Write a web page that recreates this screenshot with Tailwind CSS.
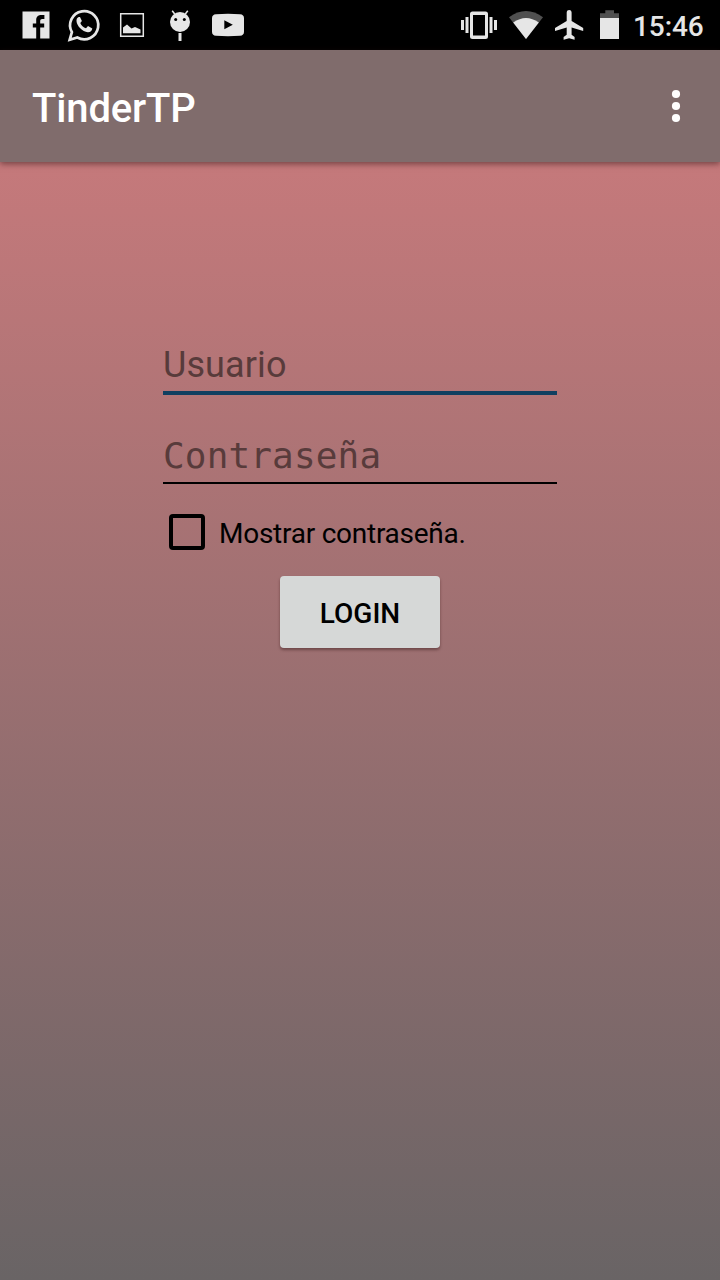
<!DOCTYPE html>
<html lang="es">
<head>
<meta charset="utf-8">
<title>TinderTP</title>
<script src="https://cdn.jsdelivr.net/npm/@tailwindcss/browser@4"></script>
</head>
<body class="w-[720px] h-[1280px] overflow-hidden flex flex-col font-['Roboto',sans-serif] bg-[#696465]">
<div class="h-[50px] shrink-0 bg-black flex items-center justify-between text-[#e6e6e6]">
  <div class="flex">
    <svg class="w-[60px] h-[50px]" viewBox="0 0 60 50" fill="currentColor"><path d="M22.500 11.500h27v27h-9.300v-11h4v-4h-4v-2.500c0-1.300.7-2 2-2h2.200v-4h-3.200c-3.500 0-5 2.200-5 5v3.500h-3.400v4h3.400v11h-13.700z"/></svg>
    <svg class="w-[48px] h-[50px]" viewBox="60 0 48 50"><path d="M69.700 39.700l2.200-7.600a14.100 14.100 0 1 1 5.400 5.400z" fill="none" stroke="currentColor" stroke-width="2.700" stroke-linejoin="miter"/><path d="M78.700 17c-1.700.7-2.300 2.300-2.200 4 .3 5 6 10.800 11.300 11.200 2.400.1 4.300-1.300 4.500-3.700l-4.300-2.500-2 2.300c-2.600-.9-4.800-3-5.700-5.400l1.600-2-1.900-4z" fill="currentColor"/></svg>
    <svg class="w-[48px] h-[50px]" viewBox="108 0 48 50"><path d="M120.700 13.700h22.600v22.600h-22.600z" fill="none" stroke="currentColor" stroke-width="1.500"/><path d="M123 33.300v-5.800l4-3 4.500 4 3.500-1.500 5.500 2.500v3.800z" fill="currentColor"/></svg>
    <svg class="w-[48px] h-[50px]" viewBox="156 0 48 50"><path d="M172.200 10.700l2.500 3.300m13.100-3.300l-2.500 3.300" stroke="currentColor" stroke-width="1.500"/><circle cx="180" cy="22" r="10" fill="currentColor"/><circle cx="175.700" cy="19.500" r="1.500" fill="#000"/><circle cx="184.300" cy="19.500" r="1.500" fill="#000"/><path d="M178.500 33h3v8h-3z" fill="currentColor"/></svg>
    <svg class="w-[48px] h-[50px]" viewBox="204 0 48 50"><path d="M216 14.200q12-.8 24 0q4 .3 4 4v13.600q0 3.700-4 4q-12 .8-24 0q-4-.3-4-4v-13.600q0-3.700 4-4z" fill="currentColor"/><path d="M224.300 20.300l8.500 4.500-8.500 4.500z" fill="#000"/></svg>
  </div>
  <div class="flex items-center">
    <svg class="w-[153px] h-[50px]" viewBox="456 0 153 50" fill="currentColor" overflow="visible">
      <path d="M461 20h3v10h-3zM465.500 17h3v16h-3zM489.500 17h3v16h-3zM494 20h3v10h-3z"/>
      <path fill-rule="evenodd" d="M472.500 11.500h13q2.500 0 2.500 2.500v22.500q0 2.500-2.500 2.500h-13q-2.500 0-2.500-2.500v-22.500q0-2.500 2.500-2.500zM473 15v20.500h12v-20.500z"/>
      <path d="M509 17.200q17-12.600 34 0l-17 21.800z" fill="#505050"/>
      <path d="M513.200 22.600q12.800-9 25.600 0l-12.800 16.400z"/>
      <path d="M583.200 31v-2.900l-11.600-7.200v-8.400c0-3.300-4.900-3.300-4.900 0v8.400l-11.700 7.200v2.900l11.700-3.600v7.300l-3.100 2.300v2.700l5.500-1.500 5.500 1.500v-2.700l-3-2.300v-7.300z"/>
      <path d="M600 13.300h5.300v-3h8.700v3h5v4.700h-19z" fill="#505050"/>
      <path d="M600 18h19v21h-19z"/>
    </svg>
    <span class="ml-[24px] w-[87px] text-[28px] leading-[50px] h-[50px] font-medium tracking-[-0.1px] pt-[2px]">15:46</span>
  </div>
</div>
<header class="h-[112px] shrink-0 relative z-10 bg-[#806c6c] flex items-center justify-between pl-8 pr-[39px] shadow-[0_2px_6px_rgba(50,20,20,0.55)]">
  <h1 class="text-[40px] leading-[48px] font-medium tracking-[-0.15px] text-white pt-[5px]">TinderTP</h1>
  <svg class="w-[10px] h-[34px]" viewBox="0 0 10 34" fill="#fff"><circle cx="5" cy="5" r="4.100"/><circle cx="5" cy="17" r="4.100"/><circle cx="5" cy="29" r="4.100"/></svg>
</header>
<main class="flex-1 flex flex-col items-center bg-linear-to-b/srgb from-[#c5797b] to-[#696465] pt-[173px]">
  <div class="w-[394px] flex flex-col">
    <div class="h-[60px] border-b-4 border-[#103f60] text-[36px] leading-[60px] tracking-[0.1px] text-[#583b3b]">Usuario</div>
    <div class="h-[89px] border-b-2 border-black pt-[34px] text-[36px] leading-[54px] tracking-[0.15px] text-[#583b3b] font-['DejaVu_Sans_Mono',monospace] whitespace-nowrap">Contraseña</div>
    <div class="mt-[30px] ml-[6px] h-9 flex items-center">
      <span class="size-9 border-4 border-black rounded-[4px]"></span>
      <span class="ml-[14px] pt-[3px] text-[28px] leading-9 tracking-[-0.25px] text-black whitespace-nowrap">Mostrar contraseña.</span>
    </div>
  </div>
  <button class="mt-[26px] w-40 h-[72px] rounded-[4px] bg-[#d6d8d7] text-[28px] font-medium text-black pt-[4px] shadow-[0_2px_3px_rgba(40,10,10,0.4)]">LOGIN</button>
</main>
</body>
</html>
